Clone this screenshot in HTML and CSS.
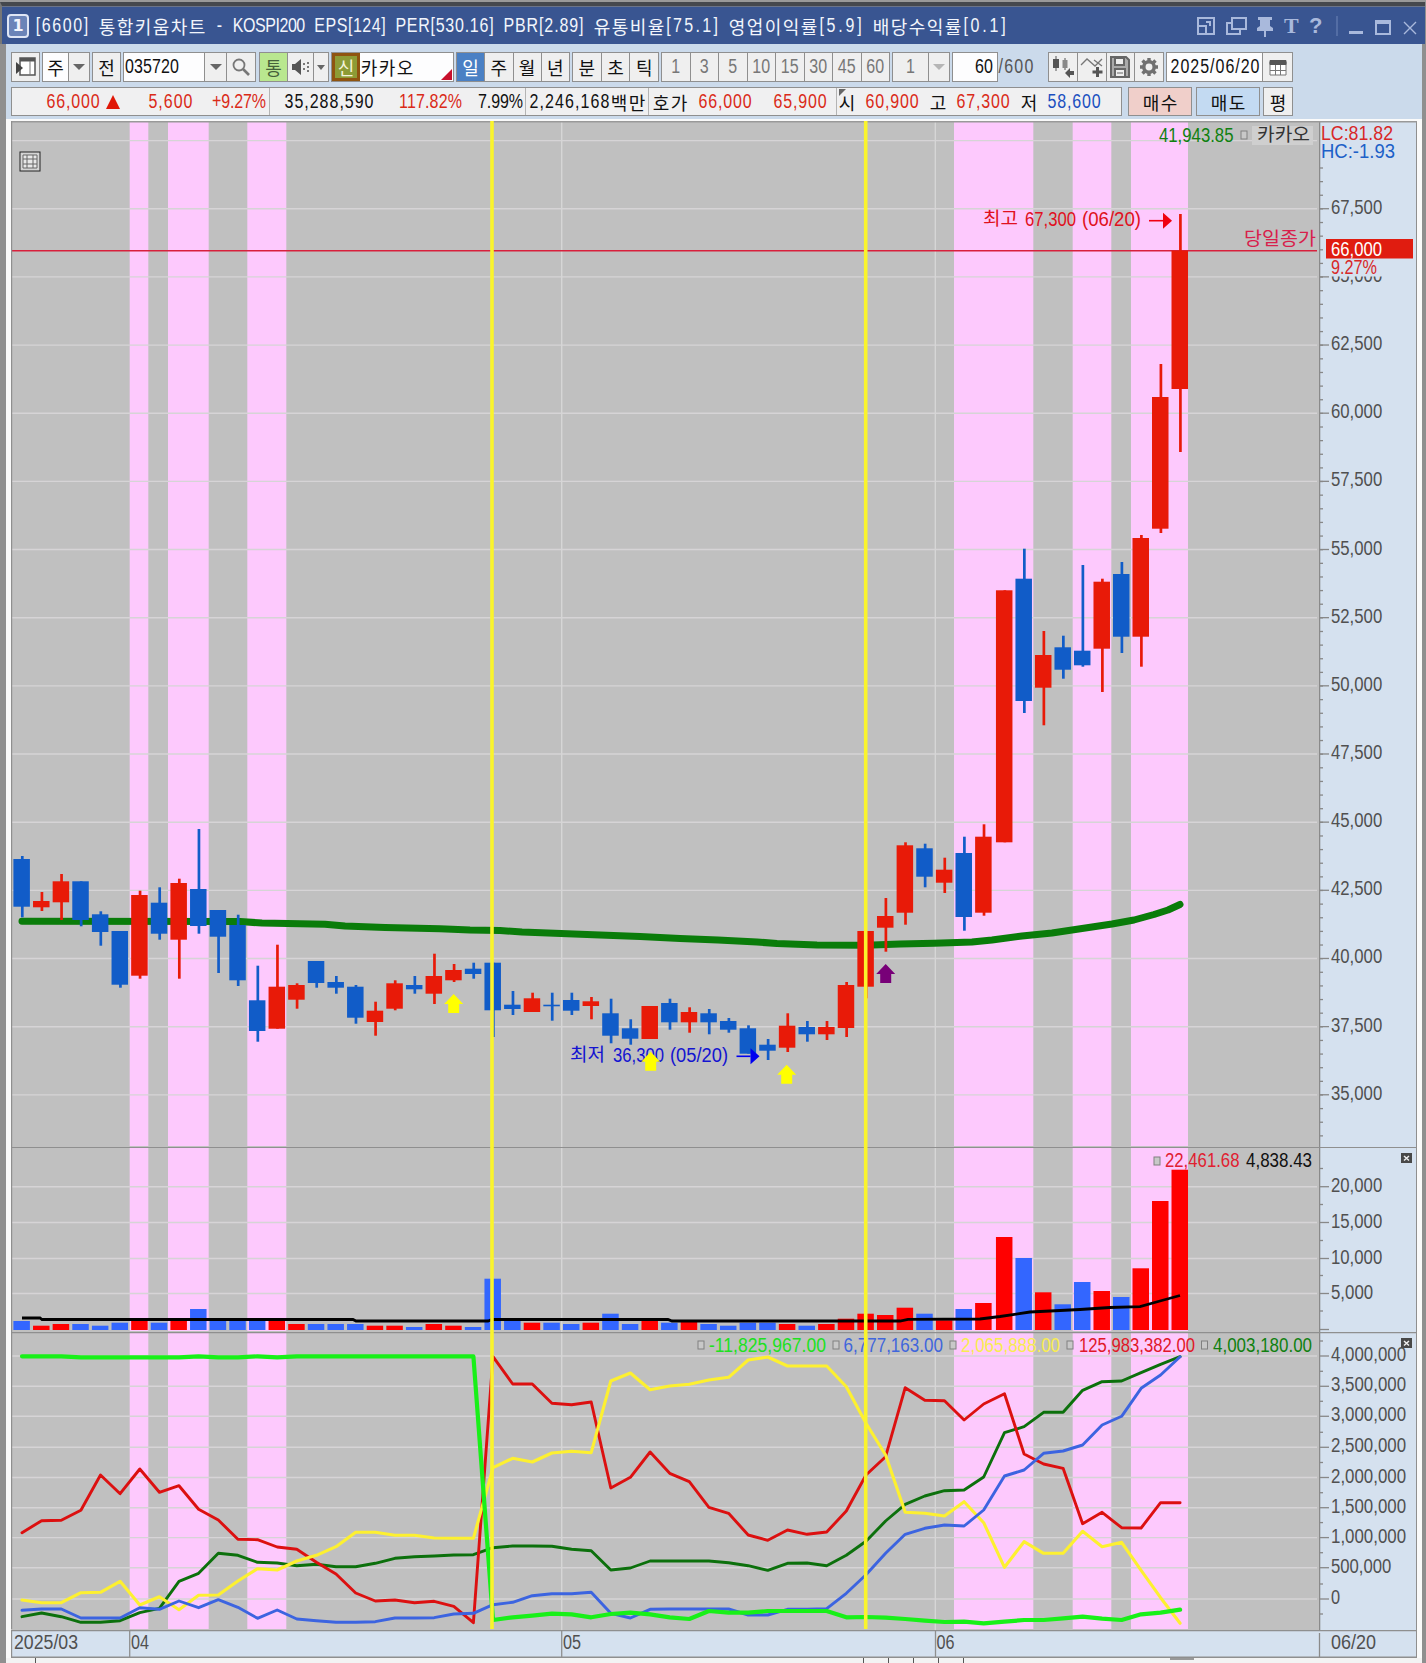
FILE: index.html
```
<!DOCTYPE html>
<html lang="ko">
<head>
    <meta charset="UTF-8">
    <meta name="viewport" content="width=device-width, initial-scale=1.0">
    <title>통합키움차트</title>
    <link rel="stylesheet" href="styles.css">
</head>
<body>
    <div class="window">
        <header class="titlebar">
            <span class="win-no">1</span>
            <h1 class="fw">[6600] 통합키움차트 - KOSPI200 EPS[124] PER[530.16] PBR[2.89] 유통비율[75.1] 영업이익률[5.9] 배당수익률[0.1]</h1>
            <svg class="win-icons" width="224" height="36" viewBox="1194 7 224 36">
                <g fill="none" stroke="#a9b9dc" stroke-width="2">
                    <path d="M1198 17h16v16h-16zM1198 25h8v8M1206 21h4v4"/>
                    <path d="M1232 17h14v11h-14zM1231 22h-4v11h13v-4"/>
                    <path d="M1337 15v20" stroke="#6f86b8" stroke-width="1"/>
                    <path d="M1376 20h14v13h-14z"/>
                    <path d="M1404 21l12 12M1416 21l-12 12" stroke-width="1.4"/>
                </g>
                <g fill="#a9b9dc">
                    <path d="M1258 16h14v3h-2v6l3 2v3h-7v6h-2v-6h-7v-3l3-2v-6h-2z"/>
                    <path d="M1376 19h14v4h-14zM1349 30h14v3h-14z"/>
                    <text class="win-t" x="1284" y="32">T</text>
                    <text class="win-q" x="1309" y="32">?</text>
                </g>
            </svg>
        </header>

        <div class="toolbar">
            <div class="row">
                <div class="group w30"><button class="cell grow">
                    <svg width="22" height="22" viewBox="0 0 22 22"><path d="M5 2h15v17H5z" fill="#fff" stroke="#555" stroke-width="1.5"/><path d="M5 2h15v3.500H5z" fill="#555"/><path d="M15 5v14" stroke="#777"/><path d="M1 6l7 6-7 6z" fill="#444"/></svg>
                </button></div>
                <div class="group w48"><span class="cell white w26 fw">주</span><button class="cell grow"><i class="down"></i></button></div>
                <div class="group w30"><button class="cell grow fw">전</button></div>
                <div class="group w133"><span class="cell white w81 left fw">035720</span><button class="cell w22"><i class="down"></i></button><button class="cell grow">
                    <svg width="20" height="20" viewBox="0 0 20 20" fill="none" stroke="#777"><circle cx="8" cy="8" r="5.500" stroke-width="1.800"/><path d="M12 12l6 6" stroke-width="2.600"/></svg>
                </button></div>
                <div class="group w70 ml"><span class="cell mint w29 fw">통</span><button class="cell w26">
                    <svg width="20" height="18" viewBox="0 0 20 18"><path d="M1 6h3l6-5v16l-6-5H1z" fill="#555"/><path d="M13 5v2M13 10v2M17 4v2M17 8v2M17 12v2" stroke="#777" stroke-width="2"/></svg>
                </button><button class="cell grow"><i class="down small"></i></button></div>
                <div class="group w123"><span class="cell olive w28 fw">신</span><span class="cell white grow left name fw">카카오</span></div>
                <div class="group w114"><button class="cell grow on fw">일</button><button class="cell grow fw">주</button><button class="cell grow fw">월</button><button class="cell grow fw">년</button></div>
                <div class="group w86"><button class="cell grow fw">분</button><button class="cell grow fw">초</button><button class="cell grow fw">틱</button></div>
                <div class="group w229 off"><span class="cell grow fw">1</span><span class="cell grow fw">3</span><span class="cell grow fw">5</span><span class="cell grow fw">10</span><span class="cell grow fw">15</span><span class="cell grow fw">30</span><span class="cell grow fw">45</span><span class="cell grow fw">60</span></div>
                <div class="group w58 off"><span class="cell w36 fw">1</span><span class="cell grow"><i class="down pale"></i></span></div>
                <div class="group w45"><span class="cell white grow right fw">60</span></div>
                <span class="total fw">/600</span>
                <div class="group w115">
                    <button class="cell grow"><svg width="24" height="24" viewBox="0 0 24 24"><path d="M5 1v15M14 3v12" stroke="#555"/><path d="M2 4h6v9H2z" fill="#555"/><path d="M11.500 5h5v8h-5z" fill="#888"/><path d="M14 18l5-5v3h4v4h-4v3z" fill="#555"/></svg></button>
                    <button class="cell grow"><svg width="24" height="24" viewBox="0 0 24 24" fill="none"><path d="M1 10l6-6 8 7 7-7M14 5l8 6" stroke="#777" stroke-width="1.300"/><path d="M17.500 12v10M12.500 17h10" stroke="#555" stroke-width="3"/></svg></button>
                    <button class="cell grow"><svg width="22" height="24" viewBox="0 0 22 24" fill="none" stroke="#666" stroke-width="2"><path d="M2 2h15l3 3v17H2z" fill="#aaa"/><path d="M6 3h9v7H6zM6 14h10v8H6z" fill="#eee"/><path d="M8 18h6" stroke-width="1"/></svg></button>
                    <button class="cell grow"><svg width="22" height="22" viewBox="0 0 22 22" fill="none" stroke="#707070"><path d="M11 2v18M2 11h18M4.500 4.500l13 13M17.500 4.500l-13 13" stroke-width="3.400"/><circle cx="11" cy="11" r="5.200" stroke-width="3.500" fill="#efefef"/></svg></button>
                </div>
                <div class="group w127"><span class="cell white w96 left date fw">2025/06/20</span><button class="cell grow">
                    <svg width="18" height="17" viewBox="0 0 18 17" fill="none" stroke="#777"><path d="M1 3h16v13H1zM1 11.500h16M6.500 6v10M11.500 6v10" fill="#fff"/><path d="M1 1.500h16v4H1z" fill="#555" stroke="#555"/></svg>
                </button></div>
            </div>

            <div class="row">
                <div class="quote">
                    <div class="q-cell w257">
                        <span class="up fw a1">66,000</span><i class="tri"></i>
                        <span class="up fw a2">5,600</span>
                        <span class="up fw a3">+9.27%</span>
                    </div>
                    <div class="q-cell w256"><span class="fw a4">35,288,590</span><span class="up fw a5">117.82%</span><span class="fw a6">7.99%</span></div>
                    <div class="q-cell w123"><span class="fw a7">2,246,168백만</span></div>
                    <div class="q-cell w188"><span class="fw a7">호가</span><span class="up fw a8">66,000</span><span class="up fw a9">65,900</span></div>
                    <div class="q-cell last mark"><span class="fw b1">시</span><span class="up fw b2">60,900</span><span class="fw b3">고</span><span class="up fw b2">67,300</span><span class="fw b3">저</span><span class="dn fw b2">58,600</span></div>
                </div>
                <button class="btn buy fw">매수</button>
                <button class="btn sell fw">매도</button>
                <button class="btn avg fw">평</button>
            </div>
        </div>

        <main class="chart">
            <section class="panel">
                <svg class="plot" id="price-plot" width="1308" height="1026" viewBox="11 121 1308 1026"></svg>
                <svg class="axis" id="price-axis" width="98" height="1026" viewBox="1319 121 98 1026"></svg>
            </section>
            <section class="panel">
                <svg class="plot" id="volume-plot" width="1308" height="185" viewBox="11 1147 1308 185"></svg>
                <svg class="axis" id="volume-axis" width="98" height="185" viewBox="1319 1147 98 185"></svg>
            </section>
            <section class="panel">
                <svg class="plot" id="flow-plot" width="1308" height="298" viewBox="11 1332 1308 298"></svg>
                <svg class="axis" id="flow-axis" width="98" height="298" viewBox="1319 1332 98 298"></svg>
            </section>
            <svg class="dates" id="dates" width="1406" height="28" viewBox="11 1630 1406 28"></svg>
        </main>

        <footer class="tabs">
            <i></i><i class="gap"></i><i></i><i></i><i></i><i></i><i class="wide"></i>
        </footer>
    </div>
    <script src="chart.js"></script>
</body>
</html>
```

FILE: styles.css
```
:root {
    --title: #395591;
    --bar: #cbdaeb;
    --axis: #d5e1ef;
    --line: #8f8f8f;
    --up: #da2a18;
    --down: #1a4fc0;
    --plot: #c0c0c0;
}

* {
    margin: 0;
    padding: 0;
    box-sizing: border-box;
}

body {
    width: 1426px;
    height: 1663px;
    overflow: hidden;
    background: #8f8f8f;
    font-family: "Liberation Sans", "Noto Sans CJK KR", sans-serif;
    font-size: 16px;
    line-height: 1;
    color: #111;
}

.window {
    height: 1663px;
    border-top: 2px solid #999;
    display: flex;
    flex-direction: column;
}

.titlebar {
    height: 42px;
    margin-right: 1px;
    border-top: 4px solid #45484d;
    border-left: 2px solid #777;
    box-shadow: inset 0 1px #6b7488;
    background: var(--title);
    color: #f2f5fc;
    display: flex;
    align-items: center;
    padding: 2px 7px 0 5px;
}

.win-no {
    width: 22px;
    height: 24px;
    border: 2px solid #dfe6f5;
    border-radius: 4px;
    background: #6b84b8;
    font: bold 16px/20px "DejaVu Sans", sans-serif;
    text-align: center;
}

h1 {
    flex: 1;
    margin-left: 6px;
    font-size: 16px;
    font-weight: normal;
}

.win-t {
    font: bold 22px "Liberation Serif", serif;
}

.win-q {
    font: bold 22px "Liberation Sans", sans-serif;
}

/* fixed pitch text: 9px per latin letter, 18px per hangul */
.fw {
    white-space: pre;
}

.fw b {
    font-weight: normal;
    display: inline-block;
    vertical-align: middle;
}

.fw .en {
    transform: scaleY(1.22);
}

.fw .ko {
    font-family: "Noto Sans CJK KR", sans-serif;
    font-size: 18px;
    height: 18px;
    line-height: 18px;
}

.toolbar {
    height: 75px;
    margin: 0 4px 0 6px;
    padding: 8px 0 0 5px;
    background: var(--bar);
    display: flex;
    flex-direction: column;
    gap: 5px;
}

.row {
    display: flex;
    height: 30px;
}

.group {
    display: flex;
    border: 1px solid var(--line);
    background: #efefef;
    margin-right: 2px;
}

.group.ml {
    margin-left: 1px;
}

.cell {
    display: flex;
    align-items: center;
    justify-content: center;
    border: 0;
    border-right: 1px solid var(--line);
    background: #efefef;
    color: #111;
    font-family: inherit;
    font-size: 16px;
    line-height: 1;
}

.cell:last-child {
    border-right: 0;
}

.grow {
    flex: 1;
}

.white {
    background: #fdfdfe;
}

.left {
    justify-content: flex-start;
    padding-left: 1px;
}

.right {
    justify-content: flex-end;
    padding-right: 4px;
}

.date {
    padding-left: 3px;
    border-right: 1px solid var(--line);
}

.mint {
    background: #b9e78f;
    color: #46603a;
}

.olive {
    background: #8d9b36;
    border: 3px solid #8f5410;
    color: #f4f4dc;
}

.on {
    background: #4a80c4;
    color: #fff;
}

.off .cell {
    color: #777;
}

.name {
    position: relative;
    padding-left: 0;
}

.name::after {
    content: "";
    position: absolute;
    right: 1px;
    bottom: 1px;
    border-left: 11px solid transparent;
    border-bottom: 11px solid #c8102c;
}

.down {
    border: 6px solid transparent;
    border-top: 6px solid #666;
    border-bottom: 0;
}

.down.small {
    border-width: 5px 4px 0;
}

.down.pale {
    border-top-color: #b5b5b5;
}

.total {
    width: 50px;
    margin-left: -2px;
    color: #555;
    display: flex;
    align-items: center;
}

.w22 { width: 22px; }
.w26 { width: 26px; }
.w28 { width: 28px; }
.w29 { width: 28px; }
.w30 { width: 29px; }
.w36 { width: 36px; }
.w45 { width: 46px; }
.w48 { width: 48px; }
.w58 { width: 58px; }
.w70 { width: 70px; }
.w81 { width: 81px; }
.w86 { width: 87px; }
.w96 { width: 96px; }
.w114 { width: 114px; }
.w115 { width: 116px; }
.w123 { width: 123px; }
.w127 { width: 127px; }
.w133 { width: 133px; }
.w188 { width: 188px; }
.w229 { width: 229px; }
.w256 { width: 256px; }
.w257 { width: 258px; }

.quote {
    width: 1111px;
    height: 29px;
    border: 1px solid var(--line);
    background: #f0f0f1;
    display: flex;
    margin-right: 6px;
}

.q-cell {
    display: flex;
    align-items: center;
    border-right: 1px solid #b4b4b4;
}

.last {
    flex: 1;
    border-right: 0;
}

.mark {
    position: relative;
}

.mark::before {
    content: "";
    position: absolute;
    left: 2px;
    top: 1px;
    border-top: 7px solid #666;
    border-right: 7px solid transparent;
}

.up { color: var(--up); }
.dn { color: var(--down); }

.tri {
    margin-left: 6px;
    border: 7.5px solid transparent;
    border-top: 0;
    border-bottom: 14px solid #e01808;
}

.a1 { margin-left: 34px; }
.a2 { margin-left: 28px; }
.a3 { margin-left: 19px; }
.a4 { margin-left: 14px; }
.a5 { margin-left: 25px; }
.a6 { margin-left: 16px; }
.a7 { margin-left: 3px; }
.a8 { margin-left: 10px; }
.a9 { margin-left: 21px; }
.b1 { margin-left: 1px; }
.b2 { margin-left: 9px; }
.b3 { margin-left: 10px; }

.btn {
    height: 29px;
    width: 64px;
    margin-right: 4px;
    border: 1px solid var(--line);
    font-family: inherit;
    font-size: 16px;
    color: #111;
}

.buy { background: #f0cfca; }
.sell { background: #c3daf2; }

.avg {
    width: 30px;
    margin-left: -1px;
    background: #efefef;
}

.chart {
    margin: 0 4px 0 6px;
    border: solid #fafafa;
    border-width: 2px 5px 0;
    height: 1539px;
    background: #fff;
}

.panel {
    display: flex;
}

.plot {
    display: block;
    background: var(--plot);
}

.axis,
.dates {
    display: block;
    background: var(--axis);
}

.ko-text {
    font-family: "Noto Sans CJK KR", sans-serif;
    font-size: 18px;
}

.tabs {
    height: 5px;
    margin: 0 4px 0 6px;
    background: #f3f3f3;
    display: flex;
    padding-left: 5px;
}

.tabs i {
    width: 25px;
    border-right: 1px solid #555;
}

.tabs .gap {
    width: 828px;
}

.tabs .wide {
    width: 230px;
    height: 2px;
    border-right: 24px solid #999;
}
```

FILE: chart.js
```
const NS = 'http://www.w3.org/2000/svg';
const RED = '#e81a08';
const BLUE = '#115cc8';
const GRAY = '#505050';

function add(parent, tag, attrs, text) {
    const el = document.createElementNS(NS, tag);
    for (const key in attrs) el.setAttribute(key, attrs[key]);
    if (text) el.textContent = text;
    parent.appendChild(el);
    return el;
}

// narrow label: x, baseline y, text, width on screen
function label(svg, x, y, text, width, color) {
    const ko = /[가-힣]/.test(text);
    add(svg, 'text', {
        transform: `translate(${x} ${y}) scale(1 ${ko ? 1 : 1.22})`,
        fill: color || GRAY,
        textLength: width,
        lengthAdjust: 'spacingAndGlyphs',
        class: ko ? 'ko-text' : 'num-text'
    }, text);
}

function rect(svg, x, y, w, h, fill, stroke) {
    add(svg, 'rect', { x, y, width: w, height: h, fill, stroke: stroke || 'none' });
}

function line(svg, x1, y1, x2, y2, color, width) {
    add(svg, 'line', { x1, y1, x2, y2, stroke: color, 'stroke-width': width || 1 });
}

function numWidth(text) {
    return [...text].reduce((sum, c) => sum + (/[,.]/.test(c) ? 5.7 : 9.1), 0);
}

// fixed pitch text outside of the chart
document.querySelectorAll('.fw').forEach(el => {
    const runs = el.textContent.match(/[가-힣]+|[^가-힣 ]+| +/g);
    el.textContent = '';
    runs.forEach(run => {
        const ko = /[가-힣]/.test(run);
        const b = document.createElement('b');
        b.className = ko ? 'ko' : 'en';
        b.textContent = run;
        el.appendChild(b);
        const width = run.length * (ko ? 18 : 9);
        const space = (width - b.getBoundingClientRect().width) / run.length;
        b.style.letterSpacing = space + 'px';
        b.style.textIndent = space / 2 + 'px';
        b.style.width = width + 'px';
    });
});

const cx = i => 22.3 + i * 19.627 + (i >= 50 ? (60 - i) * 0.12 : 0);

// color, body top, body bottom, high, low
const candles = [
    ['b', 859, 906.7, 856, 917.3], ['r', 901, 907.3, 892, 911], ['r', 881.3, 902.3, 874, 920],
    ['b', 881.3, 920, 881.3, 926.3], ['b', 914.3, 932, 911.3, 945.7], ['b', 931, 984.7, 931, 987.7],
    ['r', 895, 975.7, 890.7, 978.7], ['b', 902.7, 933.7, 887.3, 939.7], ['r', 883, 939.7, 878.7, 978.7],
    ['b', 889, 926, 829, 933.7], ['b', 910, 936.7, 910, 973], ['b', 925, 980.3, 914.7, 986],
    ['b', 1000.3, 1031, 965.7, 1041.7], ['r', 986.7, 1028.7, 944.7, 1028.7], ['r', 985, 999.7, 983.3, 1008.7],
    ['b', 961, 983, 961, 987.7], ['b', 982, 987.7, 976, 993.7], ['b', 986.7, 1017.7, 985, 1023.7],
    ['r', 1010.7, 1022, 1001.7, 1035.7], ['r', 983.3, 1008.7, 980.3, 1010.3], ['b', 985, 989.3, 976, 993.7],
    ['r', 976, 993.7, 953.7, 1004], ['r', 970, 980.3, 964, 982], ['b', 968.7, 974, 962.7, 978.7],
    ['b', 962.7, 1010.3, 962.7, 1037], ['b', 1004.7, 1009, 991, 1015], ['r', 998.3, 1012, 992.7, 1012],
    ['b', 1004.7, 1006.3, 992.7, 1020.7], ['b', 1000, 1010.7, 992.7, 1015], ['r', 1001.3, 1006, 997, 1019.3],
    ['b', 1013.3, 1035.7, 998.7, 1043.3], ['b', 1028.3, 1038.7, 1019.3, 1044.7], ['r', 1006, 1039, 1006, 1039],
    ['b', 1003, 1022.3, 998.7, 1029.7], ['r', 1012, 1022.3, 1007.3, 1032.7], ['b', 1013.3, 1022.3, 1009, 1034.3],
    ['b', 1021, 1029.7, 1018, 1032.7], ['b', 1028.3, 1053.7, 1025.3, 1053.7], ['b', 1044.7, 1050.7, 1039, 1060],
    ['r', 1025.7, 1047.7, 1013.3, 1052], ['b', 1027, 1034.3, 1021, 1041.7], ['r', 1027, 1034.3, 1021, 1040],
    ['r', 985, 1028, 982, 1037], ['r', 931, 986.7, 931, 998.3], ['r', 916, 927.7, 898, 951.7],
    ['r', 845.3, 912.7, 842.3, 924.7], ['b', 848.3, 876.7, 843.7, 887.3], ['r', 869.7, 882.7, 857.7, 893],
    ['b', 853, 917, 836.7, 930.7], ['r', 836.7, 912.7, 824.3, 915.7], ['r', 590.3, 842.3, 590.3, 842.3],
    ['b', 578.7, 701, 548.7, 713], ['r', 655, 687.7, 631, 725.3], ['b', 647.3, 669.7, 635.7, 678.7],
    ['b', 650.7, 665.3, 565, 666.7], ['r', 581.7, 648.7, 578.7, 692], ['b', 574, 636.7, 562, 653],
    ['r', 538, 636.7, 535, 666.7], ['r', 397, 528.7, 364, 533], ['r', 250.7, 389, 214, 452]
];

const volumeTops = [
    1321, 1325.7, 1324, 1324, 1325.7, 1322.7, 1320.3, 1322.7, 1320.3, 1309, 1320.3, 1320.3, 1320.3, 1320.3, 1324,
    1324, 1324, 1324, 1325.7, 1325.7, 1327, 1324, 1325.7, 1327, 1278.7, 1321, 1322.7, 1322.7, 1324, 1322.7,
    1313.7, 1324, 1320.3, 1322.7, 1322, 1324, 1325.7, 1322.7, 1322.7, 1324, 1325.7, 1324, 1318.7, 1313.7, 1315,
    1307.7, 1313.7, 1320.3, 1309, 1303, 1237, 1258, 1292.3, 1304.3, 1282, 1291, 1297, 1268.3, 1201, 1169.7
];

// lower panel series, thirds of a pixel below y = 1280
const flows = [
    { color: '#0c700c', width: 2.9, data: [1010, 999, 1010, 1027, 1027, 1022, 998, 985, 904, 880, 820, 826, 847, 849, 857, 853, 860, 860, 850, 835, 830, 828, 825, 824, 803, 798, 798, 799, 808, 812, 870, 864, 843, 843, 843, 843, 848, 857, 871, 850, 849, 857, 826, 784, 723, 673, 648, 632, 630, 591, 458, 440, 397, 397, 331, 305, 303, 278, 253, 230] },
    { color: '#dc1010', width: 2.9, data: [758, 722, 721, 691, 585, 641, 567, 637, 617, 688, 720, 778, 779, 801, 808, 847, 882, 939, 963, 960, 968, 964, 979, 1028, 230, 312, 312, 370, 374, 366, 624, 592, 516, 580, 605, 682, 700, 765, 781, 750, 763, 756, 693, 585, 530, 323, 361, 362, 420, 372, 341, 522, 552, 565, 731, 697, 743, 744, 668, 668] },
    { color: '#fdf030', width: 3.1, data: [960, 968, 968, 938, 937, 904, 975, 950, 989, 946, 945, 903, 866, 870, 843, 826, 800, 757, 757, 766, 766, 774, 775, 775, 563, 535, 546, 519, 514, 518, 303, 279, 329, 318, 313, 300, 292, 240, 231, 258, 258, 258, 320, 430, 525, 697, 700, 708, 665, 728, 862, 785, 820, 820, 754, 800, 787, 871, 953, 1030] },
    { color: '#3c64e0', width: 2.9, data: [991, 987, 987, 1014, 1014, 1014, 983, 988, 963, 983, 959, 982, 1015, 990, 1017, 1022, 1027, 1027, 1025, 1014, 1014, 1013, 1002, 1000, 974, 967, 947, 941, 941, 937, 1000, 1014, 988, 987, 987, 987, 987, 1005, 1005, 988, 988, 986, 940, 884, 820, 763, 745, 735, 738, 690, 588, 570, 520, 513, 495, 435, 409, 325, 285, 230] },
    { color: '#18f018', width: 4.2, data: [229, 229, 229, 232, 232, 232, 232, 232, 232, 229, 232, 232, 229, 232, 229, 229, 229, 229, 229, 229, 229, 229, 229, 229, 1020, 1012, 1007, 1001, 1003, 1012, 1002, 998, 1003, 1012, 1017, 993, 998, 998, 993, 993, 993, 993, 1012, 1011, 1013, 1017, 1022, 1026, 1025, 1030, 1025, 1020, 1020, 1015, 1010, 1016, 1020, 1003, 998, 989] }
];

const bands = [[129.7, 148.3], [168, 208.7], [247.3, 286.3], [954, 1033.3], [1072.7, 1111.3], [1131, 1188]];

function drawBack(svg, top, bottom, grid) {
    bands.forEach(([a, b]) => rect(svg, a, top, b - a, bottom - top - 1, '#fdc9fd'));
    grid.forEach(y => line(svg, 12, y, 1317, y, '#d6d4d6', 1.4));
    [561.7, 935.3].forEach(x => line(svg, x, top, x, bottom, '#d6d6d6', 1.4));
}

function drawFront(svg, top, bottom) {
    [492, 865.7].forEach(x => line(svg, x, top, x, bottom, '#faf42c', 3.6));
    line(svg, 11.5, top, 11.5, bottom, '#8f8f8f', 1.4);
}

function drawAxis(svg, top, bottom, ticks, minor) {
    line(svg, 1319.6, top, 1319.6, bottom, '#8a8a8a', 1.4);
    line(svg, 1416.5, top, 1416.5, bottom, '#8f8f8f');
    ticks.forEach(([y, text]) => {
        line(svg, 1320, y, 1329, y, '#888', 1.3);
        if (text) label(svg, 1331, y + 5, text, numWidth(text));
    });
    minor.forEach(y => line(svg, 1320, y, 1323, y, '#888', 1.3));
}

function closeBox(svg, y) {
    rect(svg, 1401, y, 11, 10, '#484848');
    add(svg, 'path', { d: `M1404 ${y + 3}l5 4.500M1409 ${y + 3}l-5 4.500`, stroke: '#eee', 'stroke-width': 1.5 });
}

function box(svg, x, y) {
    rect(svg, x, y, 6, 8, '#c8c8c8', '#808080');
}

function upArrow(svg, x, y, color) {
    add(svg, 'path', { d: `M${x} ${y}l9.500 10h-4v9h-11v-9h-4z`, fill: color });
}

function sideArrow(svg, x, y, color) {
    line(svg, x, y, x + 14, y, color, 1.6);
    add(svg, 'path', { d: `M${x + 14} ${y - 8}l9 8-9 8z`, fill: color });
}

/* price */
const priceGrid = [];
for (let i = 0; i <= 14; i++) priceGrid.push(140.6 + i * 68.16);

const price = document.getElementById('price-plot');
drawBack(price, 121, 1147, priceGrid);
line(price, 11, 121.7, 1319, 121.7, '#999', 1.4);
line(price, 12, 250.7, 1317, 250.7, '#d8203c', 1.4);
add(price, 'polyline', {
    points: '22,921.3 240,921.6 262,923 325,924.3 345,926 385,927.5 440,928.8 470,930 500,930.5 522,932 561,933.5 600,935 640,936.5 680,938.5 718,940 757,942 777,943.5 817,945 866,945.3 900,944 934,943.3 972,942 992,940 1022,936 1052,933 1082,928.500 1112,924 1134,920 1154,914.500 1168,910 1180,904.500',
    fill: 'none', stroke: '#0a7c0a', 'stroke-width': 7, 'stroke-linecap': 'round', 'stroke-linejoin': 'round'
});
candles.forEach(([c, top, bottom, high, low], i) => {
    const color = c === 'r' ? RED : BLUE;
    line(price, cx(i), high, cx(i), low, color, 2.7);
    rect(price, cx(i) - 8.9, top, 16.5, bottom - top, color);
});
label(price, 570, 1061, '최저', 35, '#1414d0');
label(price, 613, 1062, '36,300', 51, '#1414d0');
label(price, 670, 1062, '(05/20)', 58, '#1414d0');
sideArrow(price, 736.5, 1056.3, '#0000f0');
drawFront(price, 121, 1147);
upArrow(price, 453.7, 994, '#ffff00');
upArrow(price, 650.7, 1051.7, '#ffff00');
upArrow(price, 786.7, 1064.7, '#ffff00');
upArrow(price, 885.7, 964, '#780078');
label(price, 983, 225, '최고', 35, '#e01020');
label(price, 1025, 226, '67,300', 51, '#e01020');
label(price, 1082, 226, '(06/20)', 59, '#e01020');
sideArrow(price, 1149, 220.7, '#f00010');
label(price, 1244, 245, '당일종가', 72, '#d8204c');
label(price, 1159, 141.5, '41,943.85', 74.5, '#108010');
box(price, 1241, 131);
rect(price, 1252, 126, 61, 19, '#cfcfcf');
label(price, 1257, 141, '카카오', 53, '#333');
rect(price, 20, 152, 20, 19, '#d4d4d4', '#222');
add(price, 'path', { d: 'M23 155h14v13h-14zM27 155v13M33 155v13M23 159h14M23 164h14', fill: '#e8e8e8', stroke: '#666' });

const priceTicks = [];
const priceMinor = [];
for (let p = 67500, i = 0; p >= 35000; p -= 2500, i++) {
    priceTicks.push([208.7 + i * 68.16, p.toLocaleString('en-US')]);
}
for (let y = 168; y < 1140; y += 13.632) priceMinor.push(y);
const priceAxis = document.getElementById('price-axis');
drawAxis(priceAxis, 121, 1147, priceTicks, priceMinor);
line(priceAxis, 1319, 121.7, 1417, 121.7, '#999', 1.4);
rect(priceAxis, 1330, 259, 60, 17.5, '#d5e1ef');
rect(priceAxis, 1326, 239, 87, 19.5, '#e01c10');
label(priceAxis, 1331, 255.500, '66,000', 51, '#fff');
label(priceAxis, 1331, 273.500, '9.27%', 46, '#d82828');
label(priceAxis, 1321, 139.500, 'LC:81.82', 72, '#d82828');
label(priceAxis, 1321, 158, 'HC:-1.93', 74, '#1c60c8');

/* volume */
const volume = document.getElementById('volume-plot');
drawBack(volume, 1147, 1332, [1186.7, 1222.5, 1258.5, 1293.5]);
line(volume, 11, 1147.5, 1319, 1147.5, '#8f8f8f', 1.2);
candles.forEach(([c], i) => {
    rect(volume, cx(i) - 8.9, volumeTops[i], 16.5, 1330 - volumeTops[i], c === 'r' ? '#ff0000' : '#3366ff');
});
add(volume, 'polyline', {
    points: '22,1318 40,1318 42,1319.5 353,1319.5 356,1321 488,1321 492,1319.5 668,1319.5 672,1321 900,1321 908,1319.300 980,1319 1000,1316.500 1030,1312 1080,1309.500 1110,1307.500 1140,1306.700 1160,1301 1180,1295.500',
    fill: 'none', stroke: '#000', 'stroke-width': 2.8
});
drawFront(volume, 1147, 1332);
box(volume, 1154, 1157);
label(volume, 1165, 1167, '22,461.68', 74.5, '#e02030');
label(volume, 1246, 1167, '4,838.43', 66, '#111');
const volumeAxis = document.getElementById('volume-axis');
drawAxis(volumeAxis, 1147, 1332,
    [[1186.7, '20,000'], [1222.5, '15,000'], [1258.5, '10,000'], [1293.5, '5,000'], [1329.5]],
    [1168.5, 1204.5, 1240.5, 1275.5, 1311]);
line(volumeAxis, 1319, 1147.5, 1417, 1147.5, '#8f8f8f', 1.2);
closeBox(volumeAxis, 1153);

/* investor flow */
const flow = document.getElementById('flow-plot');
const flowY = [1356, 1386.3, 1416.3, 1447.3, 1477.5, 1507.7, 1537.6, 1567.7, 1599];
drawBack(flow, 1332, 1630, flowY);
line(flow, 11, 1332.5, 1319, 1332.5, '#8f8f8f', 1.4);
label(flow, 709, 1352, '-11,825,967.00', 117, '#20e020');
label(flow, 843.5, 1352, '6,777,163.00', 99.5, '#4066dc');
label(flow, 961, 1352, '2,065,888.00', 99, '#f8ec50');
label(flow, 1079, 1352, '125,983,382.00', 116, '#e01828');
label(flow, 1213, 1352, '4,003,180.00', 99, '#108010');
[698, 833, 950, 1067, 1201.5].forEach(x => box(flow, x, 1341));
flows.forEach(s => {
    add(flow, 'polyline', {
        points: s.data.map((v, i) => `${(cx(i) - 0.3).toFixed(1)},${(1280 + v / 3).toFixed(1)}`).join(' '),
        fill: 'none', stroke: s.color, 'stroke-width': s.width, 'stroke-linejoin': 'round', 'stroke-linecap': 'round'
    });
});
drawFront(flow, 1332, 1629);
const flowAxis = document.getElementById('flow-axis');
drawAxis(flowAxis, 1332, 1630,
    flowY.map((y, i) => [y, (4000000 - i * 500000).toLocaleString('en-US')]),
    flowY.map(y => y - 15).concat(1614));
line(flowAxis, 1319, 1332.5, 1417, 1332.5, '#8f8f8f', 1.4);
closeBox(flowAxis, 1338);

/* dates */
const dates = document.getElementById('dates');
line(dates, 11, 1630.5, 1417, 1630.5, '#8f8f8f', 1.4);
line(dates, 11, 1657.300, 1417, 1657.300, '#8f8f8f', 1.4);
line(dates, 11.5, 1630, 11.5, 1658, '#8f8f8f', 1.4);
line(dates, 1416.5, 1630, 1416.5, 1658, '#8f8f8f');
line(dates, 1319.5, 1633, 1319.5, 1657, '#8a8a8a', 1.3);
[129.7, 561.7, 935.5].forEach(x => line(dates, x, 1631, x, 1657, '#8f8f8f', 1.3));
label(dates, 14, 1649, '2025/03', 64);
label(dates, 131, 1649, '04', 18);
label(dates, 563, 1649, '05', 18);
label(dates, 936.5, 1649, '06', 18);
label(dates, 1331, 1649, '06/20', 45);
```
